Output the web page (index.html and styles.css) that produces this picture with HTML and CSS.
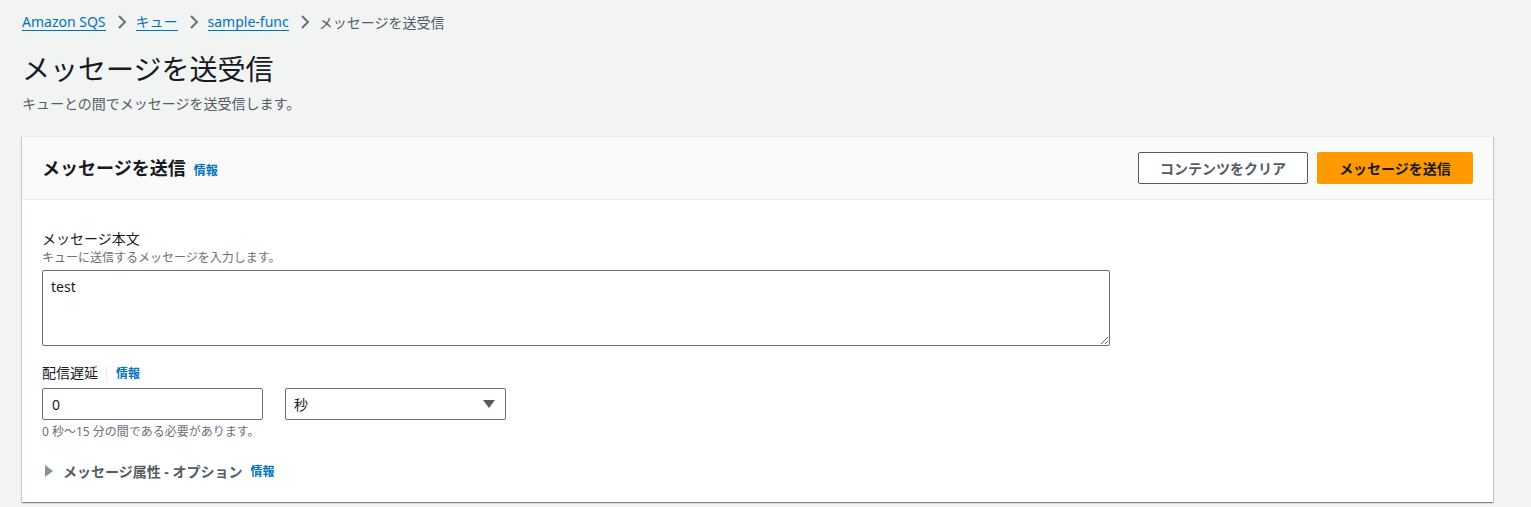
FILE: index.html
```html
<!DOCTYPE html>
<html lang="ja">
<head>
<meta charset="utf-8">
<title>メッセージを送受信</title>
<link rel="stylesheet" href="styles.css">
</head>
<body>
<div class="page">
  <nav class="breadcrumbs">
    <a class="crumb-link" href="#">Amazon SQS</a>
    <svg class="chev" viewBox="0 0 16 16" width="16" height="16"><path d="M5 2l6 6-6 6" fill="none" stroke="#687078" stroke-width="2"/></svg>
    <a class="crumb-link" href="#">キュー</a>
    <svg class="chev" viewBox="0 0 16 16" width="16" height="16"><path d="M5 2l6 6-6 6" fill="none" stroke="#687078" stroke-width="2"/></svg>
    <a class="crumb-link" href="#">sample-func</a>
    <svg class="chev" viewBox="0 0 16 16" width="16" height="16"><path d="M5 2l6 6-6 6" fill="none" stroke="#687078" stroke-width="2"/></svg>
    <span class="crumb-current">メッセージを送受信</span>
  </nav>

  <header class="page-header">
    <h1 class="page-title">メッセージを送受信</h1>
    <p class="page-desc">キューとの間でメッセージを送受信します。</p>
  </header>

  <section class="card">
    <div class="card-header">
      <div class="card-title-wrap">
        <h2 class="card-title">メッセージを送信</h2>
        <a class="info" href="#">情報</a>
      </div>
      <div class="actions">
        <button class="btn btn-normal">コンテンツをクリア</button>
        <button class="btn btn-primary">メッセージを送信</button>
      </div>
    </div>
    <div class="card-body">
      <div class="field">
        <div class="label">メッセージ本文</div>
        <div class="desc">キューに送信するメッセージを入力します。</div>
        <textarea class="textarea">test</textarea>
      </div>

      <div class="field field-delay">
        <div class="label-row">
          <span class="label">配信遅延</span>
          <span class="divider"></span>
          <a class="info" href="#">情報</a>
        </div>
        <div class="delay-row">
          <div class="input">0</div>
          <div class="select">
            <span>秒</span>
            <svg class="caret" viewBox="0 0 12 12" width="12" height="12"><path d="M0 2h12L6 10z" fill="#545b64"/></svg>
          </div>
        </div>
        <div class="constraint">0 秒～15 分の間である必要があります。</div>
      </div>

      <div class="expander">
        <svg class="exp-caret" viewBox="0 0 10 12" width="10" height="12"><path d="M1 0l8 6-8 6z" fill="#879596"/></svg>
        <span class="exp-title">メッセージ属性 - オプション</span>
        <a class="info" href="#">情報</a>
      </div>
    </div>
  </section>
</div>
</body>
</html>
```

FILE: styles.css
```css
* { box-sizing: border-box; }
html, body { margin: 0; padding: 0; }
body {
  background: #f2f3f3;
  font-family: "Noto Sans", "Noto Sans CJK JP", sans-serif;
  color: #16191f;
  font-size: 14px;
  width: 1531px;
  height: 507px;
  overflow: hidden;
}
.page { padding: 10px 38px 0 22px; }

.breadcrumbs {
  display: flex;
  align-items: center;
  height: 24px;
  font-size: 14px;
}
.crumb-link {
  color: #0073bb;
  text-decoration: none;
  border-bottom: 1px solid #0073bb;
  line-height: 17px;
}
.chev { margin: 0 6px 0 8px; }
.crumb-current { color: #545b64; }

.page-header { padding-top: 17px; }
.page-title {
  margin: 0;
  font-size: 28px;
  font-weight: 400;
  line-height: 36px;
  color: #16191f;
}
.page-desc {
  margin: 7px 0 0;
  font-size: 14px;
  line-height: 20px;
  color: #545b64;
}

.card {
  margin-top: 22px;
  background: #fff;
  box-shadow: 0 1px 1px 0 rgba(0,28,36,.3), 1px 1px 1px 0 rgba(0,28,36,.15), -1px 1px 1px 0 rgba(0,28,36,.15);
  border-top: 1px solid #eaeded;
}
.card-header {
  display: flex;
  justify-content: space-between;
  align-items: center;
  height: 63px;
  padding: 0 20px;
  background: #fafafa;
  border-bottom: 1px solid #eaeded;
}
.card-title-wrap { display: flex; align-items: baseline; }
.card-title {
  margin: 0;
  font-size: 18px;
  font-weight: 700;
  line-height: 22px;
}
.info {
  color: #0073bb;
  font-size: 12px;
  font-weight: 700;
  text-decoration: none;
  margin-left: 8px;
}
.actions { display: flex; gap: 9px; }
.btn {
  font-family: inherit;
  font-size: 14px;
  font-weight: 700;
  height: 32px;
  border-radius: 2px;
  padding: 0 20px;
  cursor: pointer;
}
.btn-normal {
  width: 170px;
  background: #fff;
  color: #545b64;
  border: 1px solid #545b64;
}
.btn-primary {
  width: 156px;
  background: #ff9900;
  color: #16191f;
  border: 1px solid #ff9900;
}

.card-body { padding: 29px 20px 20px; }
.label { font-size: 14px; line-height: 20px; color: #16191f; }
.desc { font-size: 12px; line-height: 16px; color: #687078; margin-top: 1px; margin-bottom: 4px; }
.textarea {
  display: block;
  width: 1068px;
  height: 76px;
  border: 1px solid #687078;
  border-radius: 2px;
  padding: 6px 8px;
  font-family: inherit;
  font-size: 14px;
  line-height: 20px;
  color: #16191f;
  resize: vertical;
}

.field-delay { margin-top: 16px; }
.label-row { display: flex; align-items: center; height: 22px; }
.divider { width: 1px; height: 16px; background: #eaeded; margin-left: 8px; }
.label-row .info { margin-left: 9px; }
.delay-row { display: flex; gap: 22px; margin-top: 4px; }
.input, .select {
  width: 221px;
  height: 32px;
  border: 1px solid #687078;
  border-radius: 2px;
  display: flex;
  align-items: center;
  padding: 0 9px;
  font-size: 14px;
  color: #16191f;
}
.select { justify-content: space-between; padding-right: 10px; padding-left: 8px; }
.constraint { font-size: 12px; line-height: 16px; color: #687078; margin-top: 4px; }

.expander {
  display: flex;
  align-items: center;
  margin-top: 20px;
  height: 22px;
}
.exp-caret { margin-left: 2px; margin-right: 9px; }
.exp-title { font-size: 14px; font-weight: 700; color: #545b64; }
```
